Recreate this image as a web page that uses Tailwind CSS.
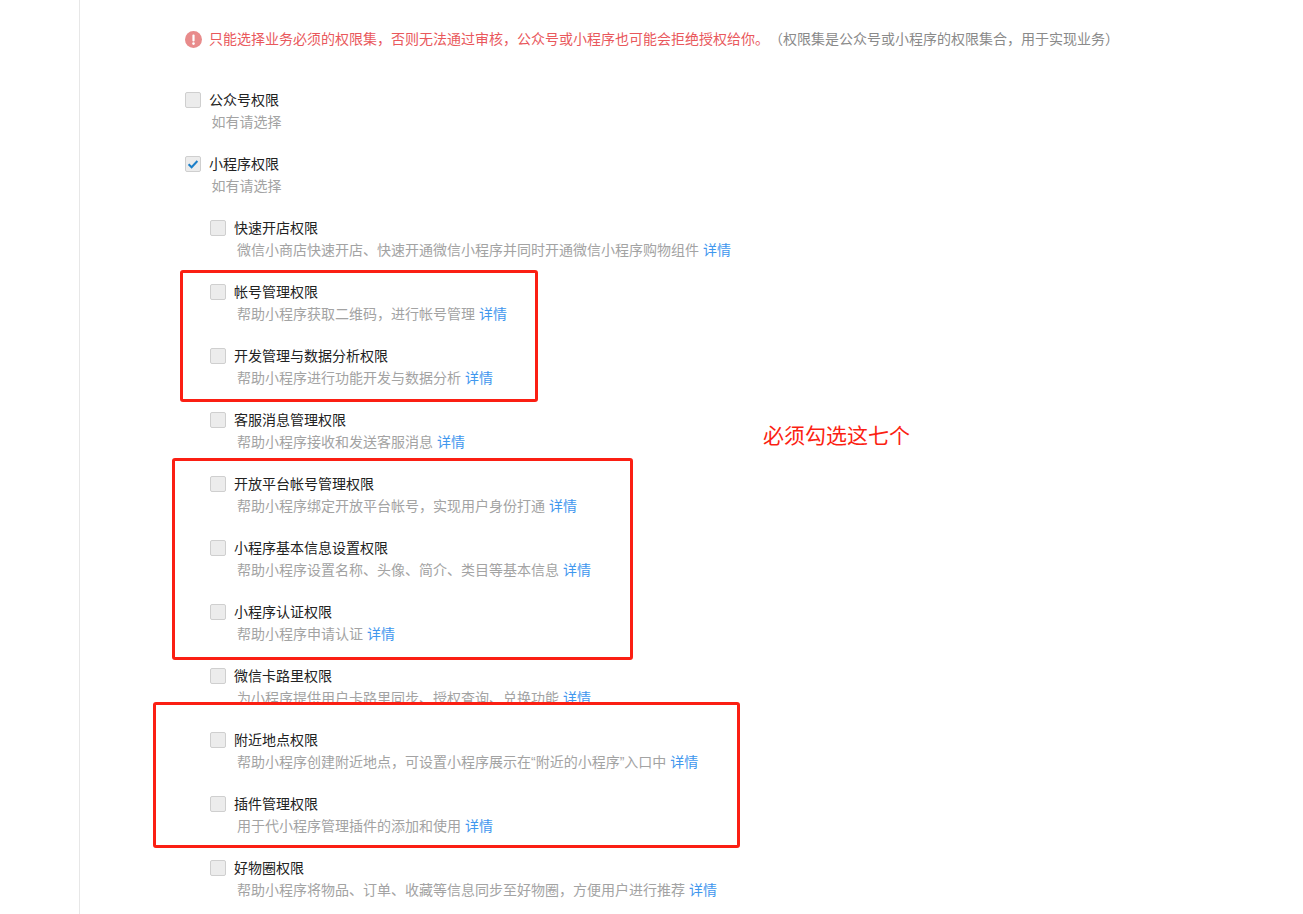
<!DOCTYPE html>
<html lang="zh-CN">
<head>
    <meta charset="UTF-8">
    <title>权限集</title>
    <script src="https://cdn.jsdelivr.net/npm/@tailwindcss/browser@4"></script>
</head>
<body class="bg-white">
    <div class="relative h-[914px] w-[1303px] overflow-hidden font-['Liberation_Sans','Noto_Sans_CJK_SC',sans-serif] text-sm leading-[22px]">
        <!-- Main panel -->
        <main class="ml-[79px] h-full border-l border-[#e7e7e7] pl-[105px] pt-[28px]">
            <!-- Warning -->
            <div class="flex h-[22px] items-center">
                <svg class="mr-[7px] h-[17px] w-[17px]" viewBox="0 0 17 17"><circle cx="8.5" cy="8.5" r="8.5" fill="#e88b8b"/><rect x="7.4" y="3.4" width="2.2" height="7" rx="1" fill="#fff"/><circle cx="8.5" cy="12.6" r="1.3" fill="#fff"/></svg>
                <span class="text-[#e9585c]">只能选择业务必须的权限集，否则无法通过审核，公众号或小程序也可能会拒绝授权给你。</span>
                <span class="text-[#8a8a8a]">（权限集是公众号或小程序的权限集合，用于实现业务）</span>
            </div>

            <div class="mt-[39px]">
                <!-- Top level groups -->
                <div class="h-[64px]">
                    <label class="flex h-[22px] items-center"><span class="h-4 w-4 rounded-[2px] border border-[#cfcfcf] bg-[#ececec]"></span><span class="ml-2 text-[#222]">公众号权限</span></label>
                    <p class="pl-[26.5px] text-[#a3a3a3]">如有请选择</p>
                </div>
                <div class="h-[64px]">
                    <label class="flex h-[22px] items-center"><span class="flex h-4 w-4 items-center justify-center rounded-[2px] border border-[#cfcfcf] bg-[#ececec]"><svg class="h-3 w-3" viewBox="0 0 12 12"><path d="M1.6 6.2 L4.6 9.2 L10.4 3" fill="none" stroke="#1b7fc9" stroke-width="2"/></svg></span><span class="ml-2 text-[#222]">小程序权限</span></label>
                    <p class="pl-[26.5px] text-[#a3a3a3]">如有请选择</p>
                </div>

                <!-- Mini program permissions -->
                <div class="pl-[25px]">
                    <div class="relative z-10 h-[64px]">
                        <label class="flex h-[22px] items-center"><span class="h-4 w-4 rounded-[2px] border border-[#cfcfcf] bg-[#ececec]"></span><span class="ml-2 text-[#222]">快速开店权限</span></label>
                        <p class="pl-[27px] text-[#a3a3a3]">微信小商店快速开店、快速开通微信小程序并同时开通微信小程序购物组件 <a class="text-[#3f97ee]">详情</a></p>
                    </div>
                    <div class="relative z-10 h-[64px]">
                        <label class="flex h-[22px] items-center"><span class="h-4 w-4 rounded-[2px] border border-[#cfcfcf] bg-[#ececec]"></span><span class="ml-2 text-[#222]">帐号管理权限</span></label>
                        <p class="pl-[27px] text-[#a3a3a3]">帮助小程序获取二维码，进行帐号管理 <a class="text-[#3f97ee]">详情</a></p>
                    </div>
                    <div class="relative z-10 h-[64px]">
                        <label class="flex h-[22px] items-center"><span class="h-4 w-4 rounded-[2px] border border-[#cfcfcf] bg-[#ececec]"></span><span class="ml-2 text-[#222]">开发管理与数据分析权限</span></label>
                        <p class="pl-[27px] text-[#a3a3a3]">帮助小程序进行功能开发与数据分析 <a class="text-[#3f97ee]">详情</a></p>
                    </div>
                    <div class="relative z-10 h-[64px]">
                        <label class="flex h-[22px] items-center"><span class="h-4 w-4 rounded-[2px] border border-[#cfcfcf] bg-[#ececec]"></span><span class="ml-2 text-[#222]">客服消息管理权限</span></label>
                        <p class="pl-[27px] text-[#a3a3a3]">帮助小程序接收和发送客服消息 <a class="text-[#3f97ee]">详情</a></p>
                    </div>
                    <div class="relative z-10 h-[64px]">
                        <label class="flex h-[22px] items-center"><span class="h-4 w-4 rounded-[2px] border border-[#cfcfcf] bg-[#ececec]"></span><span class="ml-2 text-[#222]">开放平台帐号管理权限</span></label>
                        <p class="pl-[27px] text-[#a3a3a3]">帮助小程序绑定开放平台帐号，实现用户身份打通 <a class="text-[#3f97ee]">详情</a></p>
                    </div>
                    <div class="relative z-10 h-[64px]">
                        <label class="flex h-[22px] items-center"><span class="h-4 w-4 rounded-[2px] border border-[#cfcfcf] bg-[#ececec]"></span><span class="ml-2 text-[#222]">小程序基本信息设置权限</span></label>
                        <p class="pl-[27px] text-[#a3a3a3]">帮助小程序设置名称、头像、简介、类目等基本信息 <a class="text-[#3f97ee]">详情</a></p>
                    </div>
                    <div class="relative z-10 h-[64px]">
                        <label class="flex h-[22px] items-center"><span class="h-4 w-4 rounded-[2px] border border-[#cfcfcf] bg-[#ececec]"></span><span class="ml-2 text-[#222]">小程序认证权限</span></label>
                        <p class="pl-[27px] text-[#a3a3a3]">帮助小程序申请认证 <a class="text-[#3f97ee]">详情</a></p>
                    </div>
                    <!-- this row stays unpositioned: the white annotation box cuts through its description -->
                    <div class="h-[64px]">
                        <label class="flex h-[22px] items-center"><span class="h-4 w-4 rounded-[2px] border border-[#cfcfcf] bg-[#ececec]"></span><span class="ml-2 text-[#222]">微信卡路里权限</span></label>
                        <p class="pl-[27px] text-[#a3a3a3]">为小程序提供用户卡路里同步、授权查询、兑换功能 <a class="text-[#3f97ee]">详情</a></p>
                    </div>
                    <div class="relative z-10 h-[64px]">
                        <label class="flex h-[22px] items-center"><span class="h-4 w-4 rounded-[2px] border border-[#cfcfcf] bg-[#ececec]"></span><span class="ml-2 text-[#222]">附近地点权限</span></label>
                        <p class="pl-[27px] text-[#a3a3a3]">帮助小程序创建附近地点，可设置小程序展示在“附近的小程序”入口中 <a class="text-[#3f97ee]">详情</a></p>
                    </div>
                    <div class="relative z-10 h-[64px]">
                        <label class="flex h-[22px] items-center"><span class="h-4 w-4 rounded-[2px] border border-[#cfcfcf] bg-[#ececec]"></span><span class="ml-2 text-[#222]">插件管理权限</span></label>
                        <p class="pl-[27px] text-[#a3a3a3]">用于代小程序管理插件的添加和使用 <a class="text-[#3f97ee]">详情</a></p>
                    </div>
                    <div class="relative z-10 h-[64px]">
                        <label class="flex h-[22px] items-center"><span class="h-4 w-4 rounded-[2px] border border-[#cfcfcf] bg-[#ececec]"></span><span class="ml-2 text-[#222]">好物圈权限</span></label>
                        <p class="pl-[27px] text-[#a3a3a3]">帮助小程序将物品、订单、收藏等信息同步至好物圈，方便用户进行推荐 <a class="text-[#3f97ee]">详情</a></p>
                    </div>
                </div>
            </div>
        </main>

        <!-- Red annotations drawn over the screenshot -->
        <div class="absolute left-[180px] top-[270px] h-[132px] w-[358px] rounded-[3px] border-[3px] border-[#fb1f13]"></div>
        <div class="absolute left-[172px] top-[458px] h-[202px] w-[461px] rounded-[3px] border-[3px] border-[#fb1f13]"></div>
        <div class="absolute left-[153px] top-[702px] h-[146px] w-[587px] rounded-[3px] border-[3px] border-[#fb1f13] bg-white"></div>
        <div class="absolute left-[763px] top-[422px] text-[21px] leading-[28px] text-[#fb1f13]">必须勾选这七个</div>
    </div>
</body>
</html>
